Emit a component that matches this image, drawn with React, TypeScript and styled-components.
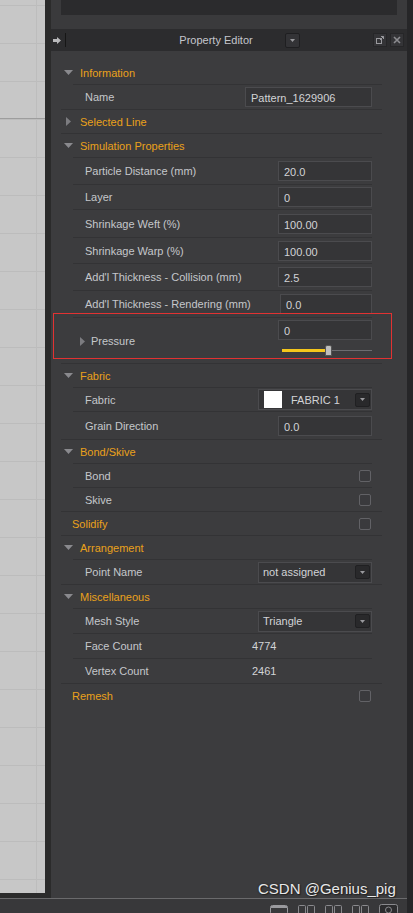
import React from "react";
import styled, { createGlobalStyle } from "styled-components";

const GlobalStyle = createGlobalStyle`
  html, body {
    margin: 0;
    padding: 0;
    background: #2b2b2b;
  }
  body {
    font-family: "Liberation Sans", Arial, sans-serif;
    font-size: 11px;
  }
`;

const Screen = styled.div`
  width: 413px;
  height: 913px;
  display: flex;
  flex-direction: column;
  overflow: hidden;
  position: relative;
  background: #262628;
`;

const Main = styled.div`
  display: flex;
  height: 898px;
`;

const ViewportWrap = styled.div`
  width: 45px;
  padding-bottom: 5px;
  background: #2b2b2b;
  display: flex;
`;

const Viewport = styled.div`
  flex: 1;
  background:
    linear-gradient(#9d9d9d, #9d9d9d) 0 118px / 100% 1px no-repeat,
    linear-gradient(90deg, transparent 36px, #bdbdbd 36px, #bdbdbd 37px, transparent 37px),
    repeating-linear-gradient(
      180deg,
      transparent 0,
      transparent 5px,
      #bcbcbc 5px,
      #bcbcbc 6px,
      transparent 6px,
      transparent 38px
    ),
    #c7c7c7;
`;

const Gutter = styled.div`
  width: 6px;
  background: #2b2b2b;
`;

const Panel = styled.div`
  width: 356px;
  display: flex;
  flex-direction: column;
  background: #3c3c3e;
`;

const TopArea = styled.div`
  height: 29px;
  background: #3a3a3c;
  padding: 0 10px;
`;

const TopInner = styled.div`
  height: 15px;
  background: #2b2b2d;
`;

const TitleBar = styled.div`
  height: 22px;
  background: #2c2c2e;
  display: flex;
  align-items: center;
  padding: 0 3px 0 2px;
`;

const Separator = styled.div`
  width: 1px;
  height: 14px;
  background: #161616;
  margin-left: 4px;
`;

const TitleCenter = styled.div`
  flex: 1;
  display: grid;
  grid-template-columns: 1fr auto 1fr;
  align-items: center;
`;

const Title = styled.div`
  grid-column: 2;
  color: #c4c6cc;
  font-size: 11px;
  margin-right: 4px;
`;

const HeadDrop = styled.div`
  grid-column: 3;
  justify-self: start;
  margin-left: 28px;
  width: 13px;
  height: 13px;
  border-radius: 2px;
  background: #333336;
  border: 1px solid #1f1f21;
  display: flex;
  align-items: center;
  justify-content: center;
`;

const HeadIcon = styled.div`
  width: 12px;
  height: 12px;
  margin-left: 3px;
  background: #343437;
  border: 1px solid #262628;
  display: flex;
  align-items: center;
  justify-content: center;
`;

const Body = styled.div`
  flex: 1;
  padding: 10px 25px 0 10px;
`;

const Section = styled.div`
  border-bottom: 1px solid #333335;
`;

const SectionHead = styled.div<{ $plain?: boolean }>`
  height: 23px;
  display: flex;
  align-items: center;
  padding-left: ${(p) => (p.$plain ? 11 : 3)}px;
  color: #eaa11b;
  font-size: 11px;
`;

const CaretBox = styled.span`
  width: 9px;
  display: inline-flex;
  justify-content: center;
  margin-right: 7px;
`;

const Row = styled.div<{ $h: number }>`
  height: ${(p) => p.$h}px;
  border-top: 1px solid #333335;
  display: flex;
  align-items: center;
  padding-left: 12px;
  position: relative;
`;

const Children = styled.div<{ $wide?: boolean }>`
  margin-left: 12px;
  margin-right: ${(p) => (p.$wide ? 0 : 10)}px;
  ${(p) => (p.$wide ? `${Row} { padding-right: 10px; }` : "")}
`;

const Label = styled.span`
  color: #c5c7cb;
  flex: 1;
  white-space: nowrap;
`;

const HeadLabel = styled(Label)`
  color: #eaa11b;
`;

const Field = styled.div<{ $w: number }>`
  width: ${(p) => p.$w}px;
  height: 20px;
  box-sizing: border-box;
  background: #353537;
  border: 1px solid #4b4b4e;
  color: #d2d3d6;
  display: flex;
  align-items: center;
  padding-left: 5px;
  padding-top: 2px;
`;

const Select = styled.div`
  width: 114px;
  height: 21px;
  box-sizing: border-box;
  background: #353537;
  border: 1px solid #4b4b4e;
  color: #d2d3d6;
  display: flex;
  align-items: center;
  padding: 0 1px 0 4px;
  gap: 9px;
`;

const Swatch = styled.div`
  width: 18px;
  height: 17px;
  background: #ffffff;
  margin-left: 1px;
`;

const SelectText = styled.span`
  flex: 1;
`;

const DropBtn = styled.div`
  width: 13px;
  height: 12px;
  border-radius: 2px;
  background: #29292b;
  border: 1px solid #202022;
  display: flex;
  align-items: center;
  justify-content: center;
`;

const Check = styled.div<{ $inset?: number }>`
  width: 10px;
  height: 10px;
  border: 1px solid #626266;
  border-radius: 2px;
  background: #3a3a3d;
  margin-right: ${(p) => p.$inset ?? 1}px;
`;

const Value = styled.span`
  width: 120px;
  color: #d2d3d6;
`;

const PressLabel = styled.span`
  flex: 1;
  display: flex;
  align-items: center;
  color: #c5c7cb;
  margin-left: -5px;
  margin-top: 1px;
`;

const PressCaret = styled.span`
  display: inline-flex;
  margin-right: 6px;
`;

const PressRight = styled.div`
  width: 94px;
  align-self: flex-start;
  padding-top: 2px;
  display: flex;
  flex-direction: column;
`;

const Slider = styled.div`
  margin: 5px 0 0 4px;
  height: 10px;
  display: flex;
  align-items: center;
`;

const SliderFill = styled.div`
  height: 3px;
  background: #f4c61c;
`;

const SliderRest = styled.div`
  flex: 1;
  height: 1px;
  background: #6c6c70;
`;

const Handle = styled.div`
  width: 5px;
  height: 9px;
  background: #bdbdbd;
  border: 1px solid #555;
  border-radius: 2px 2px 0 0;
  margin-top: 1px;
`;

const Highlight = styled.div`
  position: absolute;
  left: -20px;
  top: -5px;
  width: 337px;
  height: 44px;
  border: 1px solid #e23232;
  pointer-events: none;
  z-index: 2;
`;

const RightStrip = styled.div`
  width: 6px;
  background: #262628;
`;

const BottomBar = styled.div`
  height: 14px;
  border-top: 1px solid #6a6a6c;
  margin-right: 6px;
  background: #38383a;
  display: flex;
  align-items: flex-end;
  justify-content: flex-end;
  padding-right: 9px;
  gap: 10px;
`;

const BarIcon = styled.div`
  height: 10px;
  display: flex;
  align-items: flex-end;
`;

const Watermark = styled.div`
  position: absolute;
  left: 258px;
  top: 880px;
  font-family: "Liberation Sans", Arial, sans-serif;
  font-size: 15px;
  color: #e8e8e8;
  text-shadow: 0 0 2px #222, 1px 1px 1px #222;
  pointer-events: none;
`;

function Caret({ open }: { open: boolean }) {
  return open ? (
    <svg width="9" height="5" viewBox="0 0 9 5">
      <polygon points="0,0 9,0 4.5,5" fill="#8a8a8e" />
    </svg>
  ) : (
    <svg width="5" height="9" viewBox="0 0 5 9">
      <polygon points="0,0 5,4.5 0,9" fill="#7c7c80" />
    </svg>
  );
}

function DownTri() {
  return (
    <svg width="5" height="3" viewBox="0 0 5 3">
      <polygon points="0,0 5,0 2.5,3" fill="#9a9a9e" />
    </svg>
  );
}

function Head({ title, open }: { title: string; open: boolean }) {
  return (
    <SectionHead>
      <CaretBox>
        <Caret open={open} />
      </CaretBox>
      {title}
    </SectionHead>
  );
}

function InputRow({ label, value, h, w = 94 }: { label: string; value: string; h: number; w?: number }) {
  return (
    <Row $h={h}>
      <Label>{label}</Label>
      <Field $w={w}>{value}</Field>
    </Row>
  );
}

function CheckRow({ label }: { label: string }) {
  return (
    <Row $h={23}>
      <Label>{label}</Label>
      <Check />
    </Row>
  );
}

function SelectRow({ label, value, h = 23, swatch }: { label: string; value: string; h?: number; swatch?: boolean }) {
  return (
    <Row $h={h}>
      <Label>{label}</Label>
      <Select>
        {swatch && <Swatch />}
        <SelectText>{value}</SelectText>
        <DropBtn>
          <DownTri />
        </DropBtn>
      </Select>
    </Row>
  );
}

function PaneIcon() {
  return (
    <BarIcon>
      <svg width="17" height="8" viewBox="0 0 17 8">
        <rect x="0.5" y="0.5" width="7" height="9" rx="1" fill="none" stroke="#8a8a8e" />
        <rect x="9.5" y="0.5" width="7" height="9" rx="1" fill="none" stroke="#8a8a8e" />
      </svg>
    </BarIcon>
  );
}

function App() {
  return (
    <Screen>
      <GlobalStyle />
      <Main>
        <ViewportWrap>
          <Viewport />
        </ViewportWrap>
        <Gutter />
        <Panel>
          <TopArea>
            <TopInner />
          </TopArea>
          <TitleBar>
            <svg width="8" height="7" viewBox="0 0 8 7">
              <polygon points="0,2 4,2 4,0 8,3.5 4,7 4,5 0,5" fill="#b9b9bb" />
            </svg>
            <Separator />
            <TitleCenter>
              <Title>Property Editor</Title>
              <HeadDrop>
                <DownTri />
              </HeadDrop>
            </TitleCenter>
            <HeadIcon>
              <svg width="10" height="10" viewBox="0 0 10 10">
                <rect x="1.5" y="3.5" width="5" height="5" fill="none" stroke="#9a9a9e" />
                <path d="M5 5 L8.5 1.5 M6 1.5 H8.5 V4" stroke="#9a9a9e" fill="none" />
              </svg>
            </HeadIcon>
            <HeadIcon>
              <svg width="8" height="8" viewBox="0 0 8 8">
                <path d="M1 1 L7 7 M7 1 L1 7" stroke="#8c8c90" strokeWidth="1.6" />
              </svg>
            </HeadIcon>
          </TitleBar>
          <Body>
            <Section>
              <Head title="Information" open />
              <Children $wide>
                <InputRow label="Name" value="Pattern_1629906" h={24} w={127} />
              </Children>
            </Section>
            <Section>
              <Head title="Selected Line" open={false} />
            </Section>
            <Section>
              <Head title="Simulation Properties" open />
              <Children>
                <InputRow label="Particle Distance (mm)" value="20.0" h={26} />
                <InputRow label="Layer" value="0" h={24} />
                <InputRow label="Shrinkage Weft (%)" value="100.00" h={27} />
                <InputRow label="Shrinkage Warp (%)" value="100.00" h={25} />
                <InputRow label="Add'l Thickness - Collision (mm)" value="2.5" h={26} />
                <InputRow label="Add'l Thickness - Rendering (mm)" value="0.0" h={26} w={92} />
                <Row $h={45}>
                  <PressLabel>
                    <PressCaret>
                      <Caret open={false} />
                    </PressCaret>
                    Pressure
                  </PressLabel>
                  <PressRight>
                    <Field $w={94}>0</Field>
                    <Slider>
                      <SliderFill style={{ width: 43 }} />
                      <Handle />
                      <SliderRest />
                    </Slider>
                  </PressRight>
                  <Highlight />
                </Row>
              </Children>
            </Section>
            <Section>
              <Head title="Fabric" open />
              <Children>
                <SelectRow label="Fabric" value="FABRIC 1" swatch />
                <InputRow label="Grain Direction" value="0.0" h={27} />
              </Children>
            </Section>
            <Section>
              <Head title="Bond/Skive" open />
              <Children>
                <CheckRow label="Bond" />
                <CheckRow label="Skive" />
              </Children>
            </Section>
            <Section>
              <SectionHead $plain>
                <HeadLabel>Solidify</HeadLabel>
                <Check $inset={11} />
              </SectionHead>
            </Section>
            <Section>
              <Head title="Arrangement" open />
              <Children>
                <SelectRow label="Point Name" value="not assigned" h={24} />
              </Children>
            </Section>
            <Section>
              <Head title="Miscellaneous" open />
              <Children>
                <SelectRow label="Mesh Style" value="Triangle" h={24} />
                <Row $h={24}>
                  <Label>Face Count</Label>
                  <Value>4774</Value>
                </Row>
                <Row $h={24}>
                  <Label>Vertex Count</Label>
                  <Value>2461</Value>
                </Row>
              </Children>
            </Section>
            <SectionHead $plain>
              <HeadLabel>Remesh</HeadLabel>
              <Check $inset={11} />
            </SectionHead>
          </Body>
        </Panel>
        <RightStrip />
      </Main>
      <BottomBar>
        <BarIcon>
          <svg width="18" height="8" viewBox="0 0 18 8">
            <rect x="0.5" y="0.5" width="17" height="9" rx="2" fill="none" stroke="#9a9a9e" />
            <rect x="1" y="1" width="16" height="2" fill="#9a9a9e" />
          </svg>
        </BarIcon>
        <PaneIcon />
        <PaneIcon />
        <PaneIcon />
        <BarIcon>
          <svg width="19" height="9" viewBox="0 0 19 9">
            <rect x="0.5" y="0.5" width="18" height="10" rx="2" fill="#2c2c2e" stroke="#8a8a8e" />
            <circle cx="9.5" cy="6" r="3" fill="none" stroke="#8a8a8e" />
          </svg>
        </BarIcon>
      </BottomBar>
      <Watermark>CSDN @Genius_pig</Watermark>
    </Screen>
  );
}

export default App;
